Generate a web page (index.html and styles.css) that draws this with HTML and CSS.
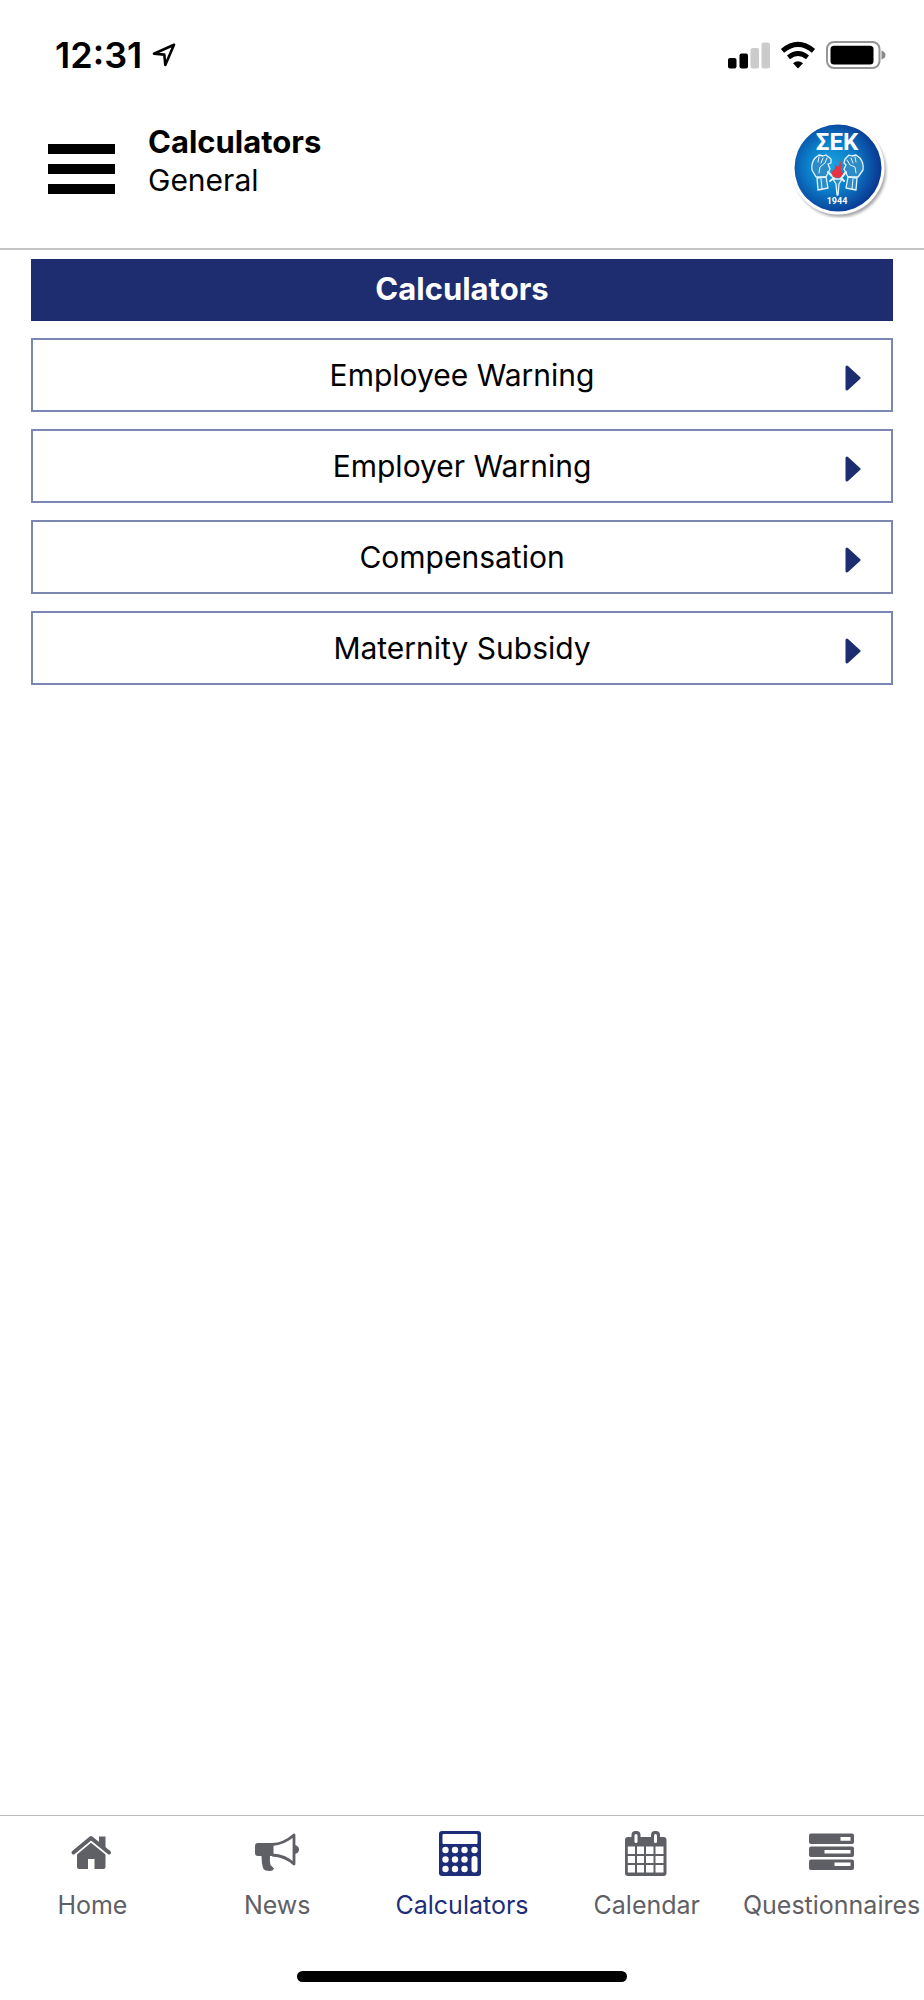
FILE: index.html
```html
<!DOCTYPE html>
<html lang="en">
<head>
<meta charset="utf-8">
<meta name="viewport" content="width=device-width, initial-scale=1">
<title>Calculators</title>
<link rel="stylesheet" href="styles.css">
</head>
<body>
<div class="app">
  <div class="status">
    <div class="status-left">
      <span class="time">12:31</span>
      <svg class="location" width="24" height="24" viewBox="0 0 24 24" aria-hidden="true"><path d="M22 1.8 2 10.8 12.3 11.6 13.3 22Z" fill="none" stroke="#000" stroke-width="2.600" stroke-linejoin="round"/></svg>
    </div>
    <div class="status-right">
      <svg width="42" height="28" viewBox="0 0 42 28" aria-hidden="true">
        <rect x="0" y="17" width="8.5" height="10.5" rx="2"/>
        <rect x="11.5" y="12.5" width="8.5" height="15" rx="2"/>
        <rect x="22.5" y="7" width="8.5" height="20.500" rx="2" fill="#cbcbcb"/>
        <rect x="33.500" y="1.500" width="8.5" height="26" rx="2" fill="#cbcbcb"/>
      </svg>
      <svg width="36" height="28" viewBox="0 0 36 28" aria-hidden="true">
        <path d="M2.500 9.800Q18-3.200 33.500 9.800" fill="none" stroke="#000" stroke-width="5"/>
        <path d="M8.500 16.300Q18 8.600 27.500 16.300" fill="none" stroke="#000" stroke-width="4.800"/>
        <path d="M13 22.300Q18 18 23 22.300L18 27.500Z"/>
      </svg>
      <svg width="60" height="28" viewBox="0 0 60 28" aria-hidden="true">
        <rect x="1" y="1" width="52.500" height="26" rx="7" fill="none" stroke="#959595" stroke-width="2"/>
        <rect x="4.500" y="4.800" width="43" height="18.700" rx="3.500"/>
        <path d="M55.500 9.500Q59.500 11 59.500 14T55.500 18.500Z" fill="#8a8a8a"/>
      </svg>
    </div>
  </div>

  <header class="header">
    <button class="menu" type="button" aria-label="Menu"><span class="bar"></span><span class="bar"></span><span class="bar"></span></button>
    <div class="heading">
      <h1 class="title">Calculators</h1>
      <p class="subtitle">General</p>
    </div>
    <svg class="logo" width="98" height="98" viewBox="0 0 98 98" role="img" aria-label="ΣΕΚ 1944">
      <defs>
        <radialGradient id="disc" cx="42%" cy="48%" r="58%">
          <stop offset="0" stop-color="#1aa5e2"/>
          <stop offset=".5" stop-color="#0b7cc8"/>
          <stop offset="1" stop-color="#0a3590"/>
        </radialGradient>
        <filter id="soft" x="-20%" y="-20%" width="140%" height="140%"><feGaussianBlur stdDeviation="1.500"/></filter>
      </defs>
      <circle cx="50" cy="51" r="46" fill="#888" opacity=".75" filter="url(#soft)"/>
      <circle cx="48" cy="48" r="46.500" fill="#fff"/>
      <circle cx="48" cy="48" r="43.500" fill="url(#disc)"/>
      <text class="logo-name" x="47" y="30" text-anchor="middle" fill="#fff">ΣΕΚ</text>
      <g fill="#2d8cc8" stroke="#e6f4fb" stroke-width="1.300" stroke-linejoin="round" stroke-linecap="round">
        <path d="M26 57 22 50Q21 43 25 38L29 35 33 36 36 35 41 39 41 43 38 44 40 49 36 57Z"/>
        <path d="M68 57 73 50Q74 43 70 38L66 35 62 36 59 35 55 39 54 43 56 45 54 49 58 57Z"/>
        <path d="M29 37 28 42M33 38 31 43M37 38 35 43 30 47 29 53M65 37 66 42M61 38 63 43M57 40 60 45 65 47 66 53" fill="none" stroke-width="1"/>
        <path d="M27 58 36 57 38 68 28 70ZM67 58 58 57 56 68 66 70Z"/>
        <path d="M31 59 32 69M63 59 62 69" stroke-width="1"/>
        <path d="M38 52 44 58 40 61M56 52 51 58 54 61" fill="none" stroke-width="2"/>
        <path d="M43 59H52L49 64 48 75H47L46 64Z"/>
      </g>
      <path d="M43 57Q40 51 45 49L45 44 48 47Q51 43 50 40L52 45 51 49 53 54 50 58Z" fill="#e63242"/>
      <text class="logo-year" x="47" y="84" text-anchor="middle" fill="#fff">1944</text>
    </svg>
  </header>

  <main class="content">
    <h2 class="section-title">Calculators</h2>
    <a class="row" href="#employee"><span>Employee Warning</span><svg class="arrow" width="16" height="26" viewBox="0 0 16 26" aria-hidden="true"><path d="M2 2V24L14 13Z"/></svg></a>
    <a class="row" href="#employer"><span>Employer Warning</span><svg class="arrow" width="16" height="26" viewBox="0 0 16 26" aria-hidden="true"><path d="M2 2V24L14 13Z"/></svg></a>
    <a class="row" href="#compensation"><span>Compensation</span><svg class="arrow" width="16" height="26" viewBox="0 0 16 26" aria-hidden="true"><path d="M2 2V24L14 13Z"/></svg></a>
    <a class="row" href="#maternity"><span>Maternity Subsidy</span><svg class="arrow" width="16" height="26" viewBox="0 0 16 26" aria-hidden="true"><path d="M2 2V24L14 13Z"/></svg></a>
  </main>

  <nav class="tabs">
    <a class="tab" href="#home">
      <svg width="46" height="46" viewBox="0 0 46 46" aria-hidden="true">
        <path d="M30 6.500H36.500V20L30 14Z"/>
        <path d="M4.500 22.500 22 8 40 22.500" fill="none" stroke="currentColor" stroke-width="4" stroke-linecap="round" stroke-linejoin="round"/>
        <path d="M8 24.500 22 12.800 36.500 24.500V37Q36.500 39 34.500 39H25.500V29H19V39H10Q8 39 8 37Z"/>
      </svg>
      <span>Home</span>
    </a>
    <a class="tab" href="#news">
      <svg width="46" height="46" viewBox="0 0 46 46" aria-hidden="true">
        <path d="M4 13H19.500V26H16Q15.500 31 16.500 35L20 38.500Q19 41 15.500 41Q10 41 9 38Q7.500 33 7.500 26H4Q1 26 1 23V16Q1 13 4 13Z"/>
        <path d="M18 14.500Q30 14 40 5V34Q31 25.500 18 25" fill="none" stroke="currentColor" stroke-width="2.800" stroke-linejoin="round"/>
        <path d="M41 15Q45 16 45 19.500T41 24Z"/>
      </svg>
      <span>News</span>
    </a>
    <a class="tab active" href="#calculators" aria-current="page">
      <svg width="46" height="46" viewBox="0 0 46 46" aria-hidden="true">
        <rect x="0" y="1" width="42" height="45" rx="3"/>
        <rect x="3.500" y="4" width="35" height="10" rx="1" fill="#fff"/>
        <g fill="#fff">
          <circle cx="6.500" cy="20" r="3.200"/><circle cx="16" cy="20" r="3.200"/><circle cx="25.500" cy="20" r="3.200"/><circle cx="35.500" cy="20" r="3.200"/>
          <circle cx="6.500" cy="29.500" r="3.200"/><circle cx="16" cy="29.500" r="3.200"/><circle cx="25.500" cy="29.500" r="3.200"/>
          <circle cx="6.500" cy="39" r="3.200"/><circle cx="16" cy="39" r="3.200"/><circle cx="25.500" cy="39" r="3.200"/>
          <rect x="32.500" y="26" width="6" height="16.500" rx="3"/>
        </g>
      </svg>
      <span>Calculators</span>
    </a>
    <a class="tab" href="#calendar">
      <svg width="46" height="46" viewBox="0 0 46 46" aria-hidden="true">
        <rect x="1" y="7" width="41.500" height="39" rx="3"/>
        <rect x="7.500" y="1" width="9" height="13" rx="4"/>
        <rect x="27" y="1" width="9" height="13" rx="4"/>
        <g fill="#fff">
          <rect x="10.500" y="4" width="3" height="9" rx="1.500"/><rect x="30" y="4" width="3" height="9" rx="1.500"/>
          <path d="M3.800 16.500H11V24H3.800ZM13 16.500H20V24H13ZM22 16.500H29.500V24H22ZM31.500 16.500H39.500V24H31.500ZM3.800 26H11V33H3.800ZM13 26H20V33H13ZM22 26H29.500V33H22ZM31.500 26H39.500V33H31.500ZM3.800 35H11V42.500H3.800ZM13 35H20V42.500H13ZM22 35H29.500V42.500H22ZM31.500 35H39.500V42.500H31.500Z"/>
        </g>
      </svg>
      <span>Calendar</span>
    </a>
    <a class="tab" href="#questionnaires">
      <svg width="46" height="46" viewBox="0 0 46 46" aria-hidden="true">
        <rect x="0" y="3.500" width="45" height="10.500" rx="2"/><rect x="0" y="16.500" width="45" height="10.500" rx="2"/><rect x="0" y="29.500" width="45" height="10.500" rx="2"/>
        <path d="M31.500 7H41.500V10.700H31.500ZM15.500 20H41.500V23.500H15.500ZM25.500 32.500H41.500V36H25.500Z" fill="#fff"/>
      </svg>
      <span>Questionnaires</span>
    </a>
  </nav>
  <div class="home-indicator"></div>
</div>
</body>
</html>
```

FILE: styles.css
```css
* {
  box-sizing: border-box;
}

body {
  margin: 0;
  background: #fff;
  color: #000;
  font-family: Inter, "Liberation Sans", sans-serif;
}

h1, h2, p {
  margin: 0;
}

a {
  color: inherit;
  text-decoration: none;
}

.app {
  display: flex;
  flex-direction: column;
  min-height: 100vh;
}

.status {
  display: flex;
  align-items: center;
  justify-content: space-between;
  height: 110px;
  padding: 0 38px 0 55px;
}

.status-left,
.status-right {
  display: flex;
  align-items: center;
  gap: 10px;
}

.time {
  font-size: 36px;
  font-weight: 600;
  line-height: 40px;
}

.header {
  display: flex;
  align-items: center;
  height: 140px;
  padding: 0 36px 20px 48px;
  border-bottom: 2px solid #c4c4c6;
}

.menu {
  display: flex;
  flex-direction: column;
  gap: 10px;
  padding: 0;
  border: 0;
  background: none;
}

.bar {
  width: 67px;
  height: 10px;
  background: #000;
}

.heading {
  flex: 1;
  padding: 0 0 16px 33px;
}

.title,
.subtitle,
.section-title,
.row {
  line-height: 38px;
}

.title,
.section-title {
  font-size: 31px;
  font-weight: 700;
}

.subtitle,
.row {
  font-size: 30px;
  font-weight: 400;
}

.logo-name {
  font: 700 24px Roboto, sans-serif;
}

.logo-year {
  font: 700 9px Roboto, sans-serif;
}

.content {
  display: flex;
  flex: 1;
  flex-direction: column;
  gap: 17px;
  padding: 9px 31px 32px;
}

.section-title {
  padding: 11px 16px 13px;
  background: #1d2d70;
  color: #fff;
  text-align: center;
}

.row {
  display: grid;
  grid-template-columns: 46px 1fr 46px;
  align-items: center;
  height: 74px;
  border: 2px solid #7b86b2;
  text-align: center;
}

.row span {
  grid-column: 2;
}

.arrow {
  margin-top: 6px;
  fill: #1d2d70;
  stroke: #1d2d70;
  stroke-width: 3;
  stroke-linejoin: round;
}

.tabs {
  display: grid;
  grid-template-columns: repeat(5, 1fr);
  padding-top: 14px;
  border-top: 1px solid #bcbcbc;
}

.tab {
  display: flex;
  flex-direction: column;
  align-items: center;
  gap: 13px;
  color: #5f6065;
  font-size: 25px;
  line-height: 32px;
}

.tab svg {
  fill: currentColor;
}

.active {
  color: #1d2d78;
}

.home-indicator {
  align-self: center;
  width: 330px;
  max-width: 60%;
  height: 11px;
  margin: 50px 0 18px;
  border-radius: 6px;
  background: #000;
}
```
